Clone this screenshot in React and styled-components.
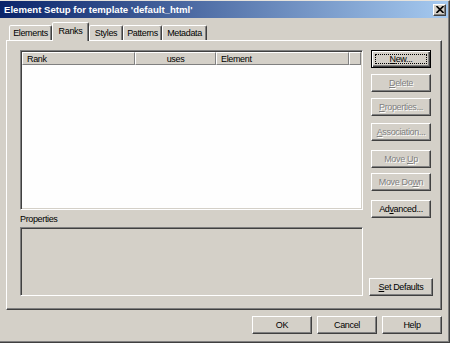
import React from "react";
import styled, { createGlobalStyle, css } from "styled-components";

const GlobalStyle = createGlobalStyle`
  html, body { margin: 0; padding: 0; background: #d4d0c8; }
  body { font-family: "Liberation Sans", Arial, sans-serif; }
  * { box-sizing: border-box; }
`;

const Window = styled.div`
  width: 450px;
  height: 343px;
  background: #d4d0c8;
  border-top: 1px solid #e6e3dd;
  border-right: 1px solid #404040;
  border-bottom: 1px solid #404040;
  box-shadow: inset -1px -1px #808080;
  display: flex;
  flex-direction: column;
  font-size: 9px;
  letter-spacing: -0.35px;
  color: #000;
`;

const TitleBar = styled.div`
  height: 17px;
  margin-right: 1px;
  padding: 0 2px 0 4px;
  display: flex;
  align-items: center;
  justify-content: space-between;
  background: linear-gradient(to right, #0a246a, #a6caf0);
  color: #fff;
  font-weight: bold;
  font-size: 9.6px;
  letter-spacing: 0;
`;

const CloseBtn = styled.div`
  width: 13px;
  height: 12px;
  background: #d4d0c8;
  border: 1px solid;
  border-color: #fff #404040 #404040 #fff;
  box-shadow: inset -1px -1px #808080;
  display: flex;
  align-items: center;
  justify-content: center;
`;

const Body = styled.div`
  display: flex;
  flex-direction: column;
  padding: 4px 0 0 6px;
`;

const TabStrip = styled.div`
  display: flex;
  align-items: flex-end;
  height: 18px;
  padding-left: 3px;
  position: relative;
  z-index: 1;
`;

const Tab = styled.div`
  width: ${(p) => p.$w}px;
  height: 15px;
  display: flex;
  align-items: center;
  justify-content: center;
  background: #d4d0c8;
  border: 1px solid;
  border-bottom: none;
  border-color: #fff #404040 transparent #fff;
  box-shadow: inset -1px 0 #808080;
  border-radius: 2px 2px 0 0;
  ${(p) =>
    p.$active &&
    css`
      height: 19px;
      margin-bottom: -1px;
      padding-bottom: 2px;
    `}
`;

const Panel = styled.div`
  width: 436px;
  height: 270px;
  border: 1px solid;
  border-color: #fff #404040 #404040 #fff;
  box-shadow: inset -1px -1px #808080;
  padding: 9px 8px 13px 13px;
  display: flex;
  gap: 6px;
`;

const LeftCol = styled.div`
  width: 343px;
  display: flex;
  flex-direction: column;
`;

const Sunken = css`
  border: 1px solid;
  border-color: #808080 #fff #fff #808080;
  box-shadow: inset 1px 1px #404040, inset -1px -1px #d4d0c8;
  padding: 1px;
`;

const List = styled.div`
  ${Sunken}
  height: 160px;
  background: #fefefe;
  display: flex;
  flex-direction: column;
`;

const HeaderRow = styled.div`
  display: flex;
  height: 13px;
  background: #d4d0c8;
`;

const HeaderCell = styled.div`
  width: ${(p) => p.$w}px;
  height: 13px;
  border: 1px solid;
  border-color: #fff #808080 #808080 #fff;
  display: flex;
  align-items: center;
  justify-content: ${(p) => (p.$center ? "center" : "flex-start")};
  padding-left: ${(p) => (p.$center ? 0 : 4)}px;
`;

const Label = styled.div`
  height: 12px;
  margin-top: 3px;
  line-height: 12px;
`;

const PropBox = styled.div`
  ${Sunken}
  margin-top: 2px;
  flex: 1;
  background: #d4d0c8;
`;

const RightCol = styled.div`
  width: 64px;
  display: flex;
  flex-direction: column;
  align-items: center;
`;

const Button = styled.div`
  position: relative;
  width: ${(p) => p.$w || 60}px;
  height: 18px;
  margin-top: ${(p) => p.$mt || 0}px;
  background: #d4d0c8;
  border: 1px solid;
  border-color: #fff #404040 #404040 #fff;
  box-shadow: inset -1px -1px #808080;
  display: flex;
  align-items: center;
  justify-content: center;
  color: ${(p) => (p.$disabled ? "#808080" : "#000")};
  text-shadow: ${(p) => (p.$disabled ? "1px 1px 0 #fff" : "none")};
  ${(p) =>
    p.$default &&
    css`
      border-color: #000;
      box-shadow: inset 1px 1px #fff, inset -1px -1px #404040,
        inset -2px -2px #808080;
      &::after {
        content: "";
        position: absolute;
        inset: 3px;
        border: 1px dotted #000;
      }
    `}
`;

const Spacer = styled.div`
  flex: 1;
`;

const Footer = styled.div`
  width: 436px;
  margin-top: 6px;
  display: flex;
  justify-content: flex-end;
  gap: 5px;
`;

export default function App() {
  return (
    <>
      <GlobalStyle />
      <Window>
        <TitleBar>
          <span>Element Setup for template 'default_html'</span>
          <CloseBtn>
            <svg width="8" height="7" viewBox="0 0 8 7">
              <path d="M0.5 0L7.5 7M7.5 0L0.5 7" stroke="#000" strokeWidth="1.6" />
            </svg>
          </CloseBtn>
        </TitleBar>
        <Body>
          <TabStrip>
            <Tab $w={43}>Elements</Tab>
            <Tab $w={37} $active>Ranks</Tab>
            <Tab $w={34}>Styles</Tab>
            <Tab $w={39}>Patterns</Tab>
            <Tab $w={45}>Metadata</Tab>
          </TabStrip>
          <Panel>
            <LeftCol>
              <List>
                <HeaderRow>
                  <HeaderCell $w={113}>Rank</HeaderCell>
                  <HeaderCell $w={81} $center>uses</HeaderCell>
                  <HeaderCell $w={133}>Element</HeaderCell>
                  <HeaderCell $w={12} />
                </HeaderRow>
              </List>
              <Label>Properties</Label>
              <PropBox />
            </LeftCol>
            <RightCol>
              <Button $default><span><u>N</u>ew...</span></Button>
              <Button $mt={6} $disabled><span><u>D</u>elete</span></Button>
              <Button $mt={6} $disabled><span><u>P</u>roperties...</span></Button>
              <Button $mt={7} $disabled><span><u>A</u>ssociation...</span></Button>
              <Button $mt={9} $disabled><span>Move <u>U</u>p</span></Button>
              <Button $mt={5} $disabled><span>Move Do<u>w</u>n</span></Button>
              <Button $mt={9}><span>Ad<u>v</u>anced...</span></Button>
              <Spacer />
              <Button $w={64}><span><u>S</u>et Defaults</span></Button>
            </RightCol>
          </Panel>
          <Footer>
            <Button>OK</Button>
            <Button>Cancel</Button>
            <Button>Help</Button>
          </Footer>
        </Body>
      </Window>
    </>
  );
}
